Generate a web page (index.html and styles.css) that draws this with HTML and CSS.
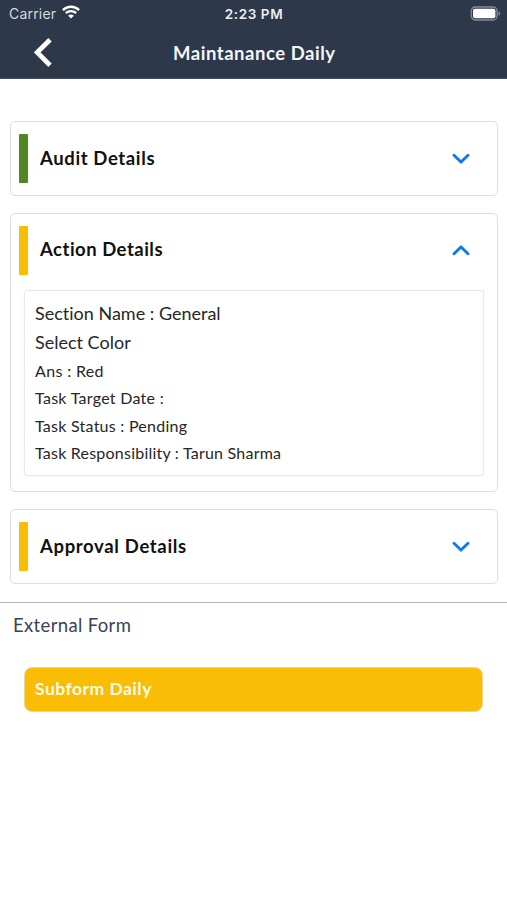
FILE: index.html
```html
<!DOCTYPE html>
<html lang="en">
<head>
<meta charset="utf-8">
<title>Maintanance Daily</title>
<link rel="stylesheet" href="styles.css">
</head>
<body>
<header class="header">
  <div class="status">
    <div class="carrier"><span>Carrier</span>
      <svg class="wifi" width="18" height="14" viewBox="0 0 18 14" fill="none" stroke="#fff" stroke-width="2.4"><path d="M.9 5.1C5.6.7 12.4.7 17.1 5.1M3.8 8.2c3-2.8 7.4-2.8 10.4 0"/><path d="M9 13.6 6.1 10.7c1.6-1.5 4.2-1.5 5.8 0z" fill="#fff" stroke="none"/></svg>
    </div>
    <time class="clock">2:23 PM</time>
    <svg class="battery" width="31" height="15" viewBox="0 0 31 15"><rect x="1.3" y="1" width="25.8" height="13" rx="4" fill="none" stroke="#858b98" stroke-width="1.3"/><rect x="3" y="2.7" width="22.4" height="9.6" rx="2" fill="#fff"/><path d="M28.5 5.2c2.1.8 2.1 3.8 0 4.6z" fill="#858b98"/></svg>
  </div>
  <div class="nav">
    <svg class="back" width="18" height="29" viewBox="0 0 18 29" fill="none" stroke="#fff" stroke-width="4.8"><path d="M16 1.7 3.2 14.4 16 27.2"/></svg>
    <h1 class="title">Maintanance Daily</h1>
  </div>
</header>
<main>
  <div class="cards">
    <section class="card">
      <div class="card-head"><span class="bar green"></span><h2 class="audit">Audit Details</h2>
        <svg class="chevron" width="18" height="12" viewBox="0 0 18 12"><path d="M2 3.2 9 10l7-6.8"/></svg></div>
    </section>
    <section class="card open">
      <div class="card-head"><span class="bar"></span><h2 class="action">Action Details</h2>
        <svg class="chevron up" width="18" height="12" viewBox="0 0 18 12"><path d="M2 9.8 9 3l7 6.8"/></svg></div>
      <div class="details">
        <p class="large section-name">Section Name : General</p>
        <p class="large select-color">Select Color</p>
        <p class="answer">Ans : Red</p>
        <p class="date">Task Target Date :</p>
        <p class="state">Task Status : Pending</p>
        <p class="owner">Task Responsibility : Tarun Sharma</p>
      </div>
    </section>
    <section class="card">
      <div class="card-head"><span class="bar"></span><h2 class="approval">Approval Details</h2>
        <svg class="chevron" width="18" height="12" viewBox="0 0 18 12"><path d="M2 3.2 9 10l7-6.8"/></svg></div>
    </section>
  </div>
  <section class="external">
    <h3><span class="external-label">External Form</span></h3>
    <button class="subform"><span class="subform-label">Subform Daily</span></button>
  </section>
</main>
</body>
</html>
```
FILE: styles.css
```css
* { box-sizing: border-box; }
body { margin: 0; background: #fff; font-family: Lato, sans-serif; font-variant-ligatures: none; color: #262626; }
h1, h2, h3, p { margin: 0; white-space: nowrap; }
svg { display: block; flex: none; }

.header { height: 79px; background: #2d384b; border-bottom: 1px solid #454e65; color: #fff; }
.status { height: 28px; display: grid; grid-template-columns: 1fr auto 1fr; align-items: center; padding: 0 6px 0 9px; font-family: Inter, sans-serif; }
.carrier { display: flex; align-items: center; gap: 6px; margin-top: -1px; font-size: 14px; color: #d5d8de; letter-spacing: .2px; }
.wifi { margin-top: -3px; }
.clock { margin-left: -2px; font-size: 13.5px; font-weight: 600; letter-spacing: .6px; color: #eceef2; }
.battery { justify-self: end; margin-top: -2px; }
.nav { height: 50px; display: grid; grid-template-columns: 173px 1fr; align-items: center; }
.back { margin-left: 34px; margin-top: -2px; }
.title { font-size: 18.5px; line-height: 24px; font-weight: 700; letter-spacing: .53px; color: #f4f6fa; }

.cards { padding: 42px 9px 18px 10px; display: flex; flex-direction: column; gap: 17px; border-bottom: 1px solid #b5b5b5; }
.card { height: 75px; border: 1.5px solid #dedede; border-radius: 5px; }
.card.open { height: 279px; }
.card-head { height: 72px; display: flex; align-items: center; padding: 0 27px 0 8px; }
.bar { width: 9px; height: 49px; margin-right: 12px; background: #f8bd04; border-radius: 1px; }
.bar.green { background: #518723; }
h2 { flex: 1; font-size: 18.5px; line-height: 24px; font-weight: 700; color: #111; }
.audit { letter-spacing: .62px; }
.action { margin-top: -2px; letter-spacing: .5px; }
.approval { margin-top: -1px; letter-spacing: .66px; }
.chevron { fill: none; stroke: #0c78f2; stroke-width: 2.9; stroke-linecap: round; }
.details { margin: 4px 13px 0 13px; height: 186px; padding: 8px 10px; border: 1.5px solid #e8e8e8; border-radius: 3px; box-shadow: 0 0 2px #eee; }
.details p { font-size: 16px; line-height: 27.3px; }
.details .large { font-size: 18px; line-height: 29px; }
.details .answer { letter-spacing: .35px; }
.date { letter-spacing: .28px; }
.state { letter-spacing: .25px; }
.owner { letter-spacing: .22px; }

.external { padding: 10px 24px 0; }
h3 { margin-left: -11px; font-size: 18.5px; line-height: 24px; font-weight: 400; letter-spacing: .35px; color: #3b4256; }
.subform { display: flex; align-items: center; width: 459px; height: 45px; margin-top: 30px; padding: 0 10px 1px; border: 1px solid #eed68c; border-radius: 8px; background: #f8bd04; color: #fffbe8; font: 700 17.5px/24px Lato, sans-serif; letter-spacing: .48px; }
```
